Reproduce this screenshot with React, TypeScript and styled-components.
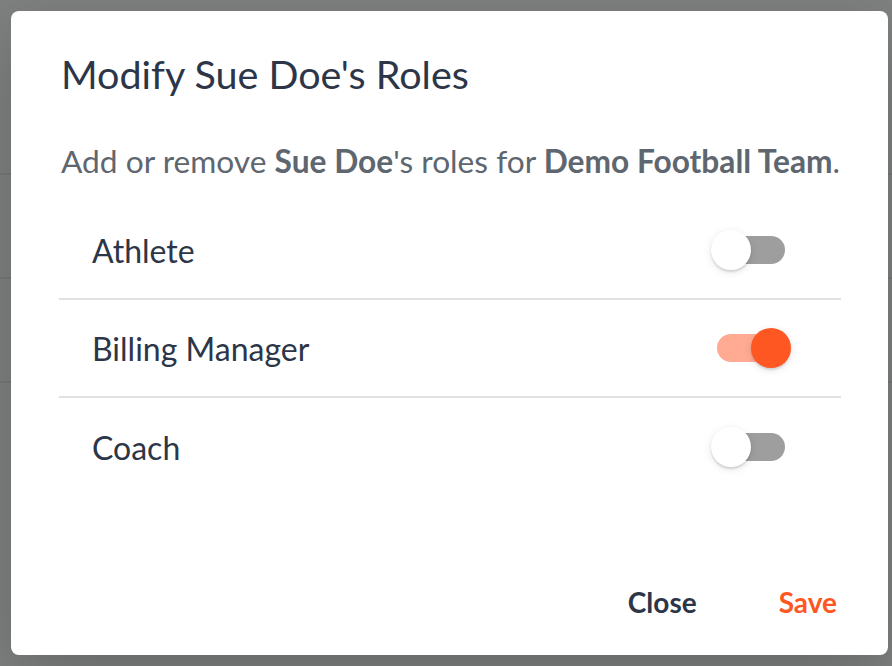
import React, { useState } from "react";
import styled, { createGlobalStyle } from "styled-components";

const GlobalStyle = createGlobalStyle`
  html, body {
    margin: 0;
    padding: 0;
    height: 100%;
  }
  body {
    font-family: Lato, "Open Sans", sans-serif;
    background: #7f8080;
  }
  #root {
    height: 100%;
  }
`;

// faint list rows of the page behind the overlay
const Backdrop = styled.div`
  width: 892px;
  height: 666px;
  padding: 11px 4px 11px 11px;
  box-sizing: border-box;
  display: flex;
  background-color: #7f8080;
  background-image: linear-gradient(
    to bottom,
    transparent 173px,
    #777878 173px,
    #777878 175px,
    transparent 175px,
    transparent 277px,
    #777878 277px,
    #777878 279px,
    transparent 279px,
    transparent 381px,
    #777878 381px,
    #777878 383px,
    transparent 383px
  );
`;

const Dialog = styled.div`
  flex: 1;
  min-width: 0;
  background: #ffffff;
  border-radius: 8px;
  display: flex;
  flex-direction: column;
  padding: 0 47px 0 48px;
  box-shadow: 0 22px 70px rgba(0, 0, 0, 0.2);
`;

const Title = styled.h2`
  margin: 0;
  padding: 31px 0 0 2px;
  font-size: 39.5px;
  font-weight: 400;
  line-height: 64px;
  height: 64px;
  color: #2c3648;
`;

const Description = styled.p`
  margin: 0;
  padding: 31px 0 0 2px;
  font-size: 31.7px;
  line-height: 48px;
  color: #5e666f;
  white-space: nowrap;

  b {
    font-weight: 700;
  }
`;

const RoleList = styled.div`
  display: flex;
  flex-direction: column;
  margin-top: 17px;
`;

const RoleRow = styled.div<{ $divider?: boolean }>`
  height: 98px;
  display: flex;
  align-items: center;
  justify-content: space-between;
  padding: 0 56px 0 33px;
  border-bottom: ${(p) => (p.$divider ? "2px solid #e2e2e2" : "none")};
  box-sizing: border-box;
`;

const RoleName = styled.span`
  font-size: 32px;
  color: #2c3648;
`;

const Switch = styled.button<{ $on: boolean }>`
  position: relative;
  width: 68px;
  height: 28px;
  padding: 0;
  border: none;
  border-radius: 14px;
  cursor: pointer;
  background: ${(p) => (p.$on ? "#ffab94" : "#9e9e9e")};
`;

const Thumb = styled.span<{ $on: boolean }>`
  position: absolute;
  top: -6px;
  left: ${(p) => (p.$on ? "34px" : "-6px")};
  width: 40px;
  height: 40px;
  border-radius: 50%;
  background: ${(p) => (p.$on ? "#ff5722" : "#ffffff")};
  box-shadow: 0 2px 2px rgba(0, 0, 0, 0.12), 0 2px 8px rgba(0, 0, 0, 0.1);
`;

const Actions = styled.div`
  margin-top: auto;
  display: flex;
  justify-content: flex-end;
  align-items: center;
  gap: 82px;
  padding: 0 4px 28px 0;
`;

const ActionButton = styled.button<{ $primary?: boolean }>`
  border: none;
  background: none;
  padding: 8px 0;
  font-family: Lato, "Open Sans", sans-serif;
  font-size: 28px;
  font-weight: 700;
  cursor: pointer;
  color: ${(p) => (p.$primary ? "#ff5722" : "#2c3648")};
`;

const roles = ["Athlete", "Billing Manager", "Coach"];

export default function App() {
  const [active, setActive] = useState<Record<string, boolean>>({
    "Billing Manager": true,
  });

  return (
    <>
      <GlobalStyle />
      <Backdrop>
        <Dialog>
          <Title>Modify Sue Doe's Roles</Title>
          <Description>
            Add or remove <b>Sue Doe</b>'s roles for <b>Demo Football Team</b>.
          </Description>
          <RoleList>
            {roles.map((role, i) => (
              <RoleRow key={role} $divider={i < roles.length - 1}>
                <RoleName>{role}</RoleName>
                <Switch
                  $on={!!active[role]}
                  onClick={() => setActive({ ...active, [role]: !active[role] })}
                >
                  <Thumb $on={!!active[role]} />
                </Switch>
              </RoleRow>
            ))}
          </RoleList>
          <Actions>
            <ActionButton>Close</ActionButton>
            <ActionButton $primary>Save</ActionButton>
          </Actions>
        </Dialog>
      </Backdrop>
    </>
  );
}
